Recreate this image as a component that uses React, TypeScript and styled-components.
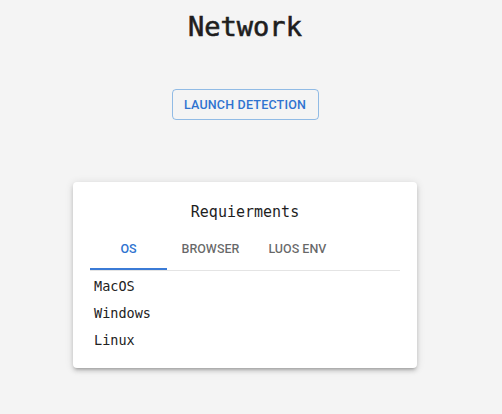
import React, { useState } from "react";
import styled, { createGlobalStyle } from "styled-components";

const Global = createGlobalStyle`
  html, body {
    margin: 0;
    padding: 0;
    background: #f4f4f4;
  }
  * { box-sizing: border-box; }
`;

const Page = styled.div`
  display: flex;
  flex-direction: column;
  align-items: center;
  width: 490px;
  padding-top: 11px;
  min-height: 414px;
  background: #f4f4f4;
`;

const Title = styled.h1`
  margin: 0;
  font-family: "DejaVu Sans Mono", "Liberation Mono", monospace;
  font-size: 27px;
  line-height: 32px;
  font-weight: 400;
  -webkit-text-stroke: 0.6px #1e1e1e;
  color: #1e1e1e;
`;

const OutlinedButton = styled.button`
  margin-top: 46px;
  width: 147px;
  height: 31px;
  padding: 0;
  white-space: nowrap;
  border: 1px solid rgba(25, 118, 210, 0.45);
  border-radius: 4px;
  background: transparent;
  color: #2f73d0;
  font-family: Roboto, "Liberation Sans", sans-serif;
  font-weight: 500;
  font-size: 12.5px;
  letter-spacing: 0.2px;
  text-transform: uppercase;
  cursor: pointer;
`;

const Card = styled.section`
  margin-top: 62px;
  width: 344px;
  padding: 20px 17px 14px;
  background: #fff;
  border-radius: 4px;
  box-shadow: 0px 3px 3px -2px rgba(0, 0, 0, 0.2),
    0px 3px 4px 0px rgba(0, 0, 0, 0.14), 0px 1px 8px 0px rgba(0, 0, 0, 0.12);
`;

const CardTitle = styled.h2`
  margin: 0;
  text-align: center;
  font-family: "DejaVu Sans Mono", "Liberation Mono", monospace;
  font-size: 15px;
  line-height: 20px;
  font-weight: 400;
  color: #1e1e1e;
`;

const TabBar = styled.div`
  display: flex;
  border-bottom: 1px solid #e4e4e4;
`;

const Tab = styled.button<{ $active: boolean }>`
  position: relative;
  display: flex;
  align-items: center;
  justify-content: center;
  min-width: 77px;
  height: 48px;
  padding: 5px 14.5px 0;
  border: none;
  background: transparent;
  font-family: Roboto, "Liberation Sans", sans-serif;
  font-weight: 500;
  font-size: 12.5px;
  letter-spacing: 0;
  text-transform: uppercase;
  color: ${(p) => (p.$active ? "#2f73d0" : "rgba(0,0,0,0.6)")};
  cursor: pointer;

  &::after {
    content: "";
    position: absolute;
    left: 0;
    right: 0;
    bottom: 0;
    height: 2px;
    background: ${(p) => (p.$active ? "#3b7bd6" : "transparent")};
  }
`;

const List = styled.ul`
  list-style: none;
  margin: 0;
  padding: 1.5px 0 0 4px;
`;

const Item = styled.li`
  font-family: "DejaVu Sans Mono", "Liberation Mono", monospace;
  font-size: 13.5px;
  line-height: 27px;
  color: #222;
`;

const data: Record<string, string[]> = {
  OS: ["MacOS", "Windows", "Linux"],
  BROWSER: ["Chrome", "Firefox", "Safari"],
  "LUOS ENV": ["Node", "Python"],
};

export default function App() {
  const [tab, setTab] = useState("OS");
  return (
    <>
      <Global />
      <Page>
        <Title>Network</Title>
        <OutlinedButton>Launch Detection</OutlinedButton>
        <Card>
          <CardTitle>Requierments</CardTitle>
          <TabBar>
            {Object.keys(data).map((k) => (
              <Tab key={k} $active={k === tab} onClick={() => setTab(k)}>
                {k}
              </Tab>
            ))}
          </TabBar>
          <List>
            {data[tab].map((i) => (
              <Item key={i}>{i}</Item>
            ))}
          </List>
        </Card>
      </Page>
    </>
  );
}
